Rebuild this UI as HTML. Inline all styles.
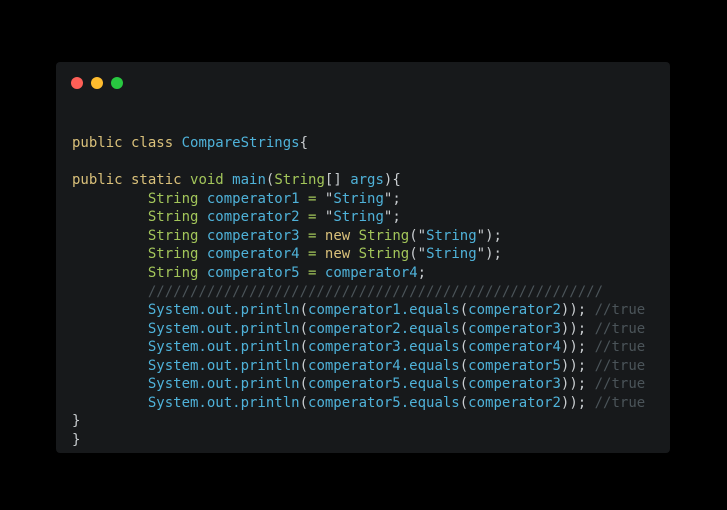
<!DOCTYPE html>
<html><head><meta charset="utf-8"><style>
html,body{margin:0;padding:0;background:#000;width:727px;height:510px;overflow:hidden}
.card{position:absolute;left:56px;top:62px;width:614px;height:391px;background:#17191b;border-radius:4px}
.d{position:absolute;top:15px;width:12px;height:12px;border-radius:50%}
pre{position:absolute;left:16px;top:72px;margin:0;font-family:"DejaVu Sans Mono","Liberation Mono",monospace;font-size:14px;line-height:18.56px;color:#c9cdd0}
.k{color:#d9c07a}.t{color:#a3c65a}.b{color:#4fb2d9}.c{color:#4b5459}.p{color:#c9cdd0}
</style></head><body>
<div class="card">
<div class="d" style="left:15px;background:#fe5f57"></div>
<div class="d" style="left:35px;background:#febc2e"></div>
<div class="d" style="left:55px;background:#28c840"></div>
<pre><span class="k">public class</span> <span class="b">CompareStrings</span>{

<span class="k">public static</span> <span class="t">void</span> <span class="b">main</span>(<span class="t">String</span>[] <span class="b">args</span>){
         <span class="t">String</span> <span class="b">comperator1</span> <span class="t">=</span> "<span class="b">String</span>";
         <span class="t">String</span> <span class="b">comperator2</span> <span class="t">=</span> "<span class="b">String</span>";
         <span class="t">String</span> <span class="b">comperator3</span> <span class="t">=</span> <span class="k">new</span> <span class="t">String</span>("<span class="b">String</span>");
         <span class="t">String</span> <span class="b">comperator4</span> <span class="t">=</span> <span class="k">new</span> <span class="t">String</span>("<span class="b">String</span>");
         <span class="t">String</span> <span class="b">comperator5</span> <span class="t">=</span> <span class="b">comperator4</span>;
         <span class="c">//////////////////////////////////////////////////////</span>
         <span class="b">System.out.println</span>(<span class="b">comperator1.equals</span>(<span class="b">comperator2</span>)); <span class="c">//true</span>
         <span class="b">System.out.println</span>(<span class="b">comperator2.equals</span>(<span class="b">comperator3</span>)); <span class="c">//true</span>
         <span class="b">System.out.println</span>(<span class="b">comperator3.equals</span>(<span class="b">comperator4</span>)); <span class="c">//true</span>
         <span class="b">System.out.println</span>(<span class="b">comperator4.equals</span>(<span class="b">comperator5</span>)); <span class="c">//true</span>
         <span class="b">System.out.println</span>(<span class="b">comperator5.equals</span>(<span class="b">comperator3</span>)); <span class="c">//true</span>
         <span class="b">System.out.println</span>(<span class="b">comperator5.equals</span>(<span class="b">comperator2</span>)); <span class="c">//true</span>
}
}</pre>
</div>
</body></html>
